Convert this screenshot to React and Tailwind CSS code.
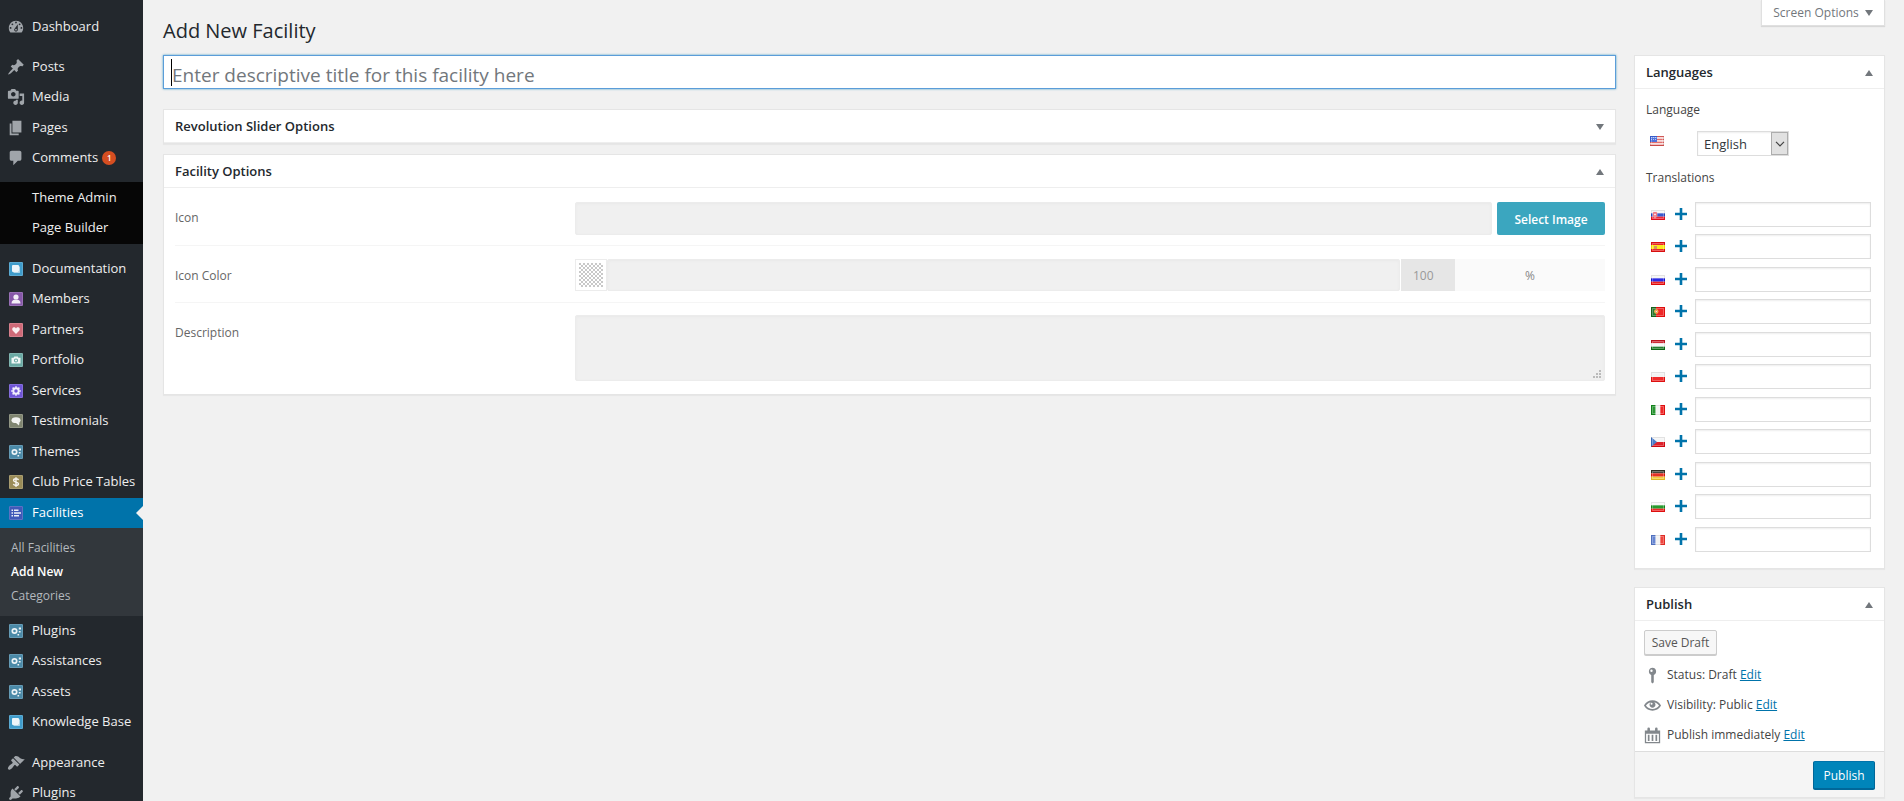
import React from "react";

const DASHICONS = {
  dashboard:
    "M3.76 16h12.48c1.1-1.37 1.76-3.11 1.76-5 0-4.42-3.58-8-8-8s-8 3.58-8 8c0 1.89.66 3.63 1.76 5zM10 4c.55 0 1 .45 1 1s-.45 1-1 1-1-.45-1-1 .45-1 1-1zM6 6c.55 0 1 .45 1 1s-.45 1-1 1-1-.45-1-1 .45-1 1-1zm8 0c.55 0 1 .45 1 1s-.45 1-1 1-1-.45-1-1 .45-1 1-1zm-5.37 5.55L12 7v6c0 1.1-.9 2-2 2s-2-.9-2-2c0-.57.24-1.08.63-1.45zM4 10c.55 0 1 .45 1 1s-.45 1-1 1-1-.45-1-1 .45-1 1-1zm12 0c.55 0 1 .45 1 1s-.45 1-1 1-1-.45-1-1 .45-1 1-1zm-5 3c0-.55-.45-1-1-1s-1 .45-1 1 .45 1 1 1 1-.45 1-1z",
  post: "M10.44 3.02l1.82-1.82 6.36 6.35-1.83 1.82c-1.05-.68-2.48-.57-3.41.36l-.75.75c-.92.93-1.04 2.35-.35 3.41l-1.83 1.82-2.41-2.41-2.8 2.79c-.42.42-3.38 2.71-3.8 2.29s1.86-3.39 2.28-3.81l2.79-2.79L4.1 9.36l1.83-1.82c1.05.69 2.48.57 3.4-.36l.75-.75c.93-.92 1.05-2.35.36-3.41z",
  media:
    "M13 11V4c0-.55-.45-1-1-1h-1.67L9 1H5L3.67 3H2c-.55 0-1 .45-1 1v7c0 .55.45 1 1 1h10c.55 0 1-.45 1-1zM7 4.5c1.38 0 2.5 1.12 2.5 2.5S8.38 9.5 7 9.5 4.5 8.38 4.5 7 5.62 4.5 7 4.5zM14 6h5v10.5c0 1.38-1.12 2.5-2.5 2.5S14 17.88 14 16.5s1.12-2.5 2.5-2.5c.17 0 .34.02.5.05V9h-3V6zm-4 8.05V13h2v3.5c0 1.38-1.12 2.5-2.5 2.5S7 17.88 7 16.5 8.12 14 9.5 14c.17 0 .34.02.5.05z",
  page: "M6 15V2h10v13H6zm-1 1h8v2H3V5h2v11z",
  comments: "M5 2h9c1.1 0 2 .9 2 2v7c0 1.1-.9 2-2 2h-2l-5 5v-5H5c-1.1 0-2-.9-2-2V4c0-1.1.9-2 2-2z",
  appearance:
    "M14.48 11.06L7.41 3.99l1.5-1.5c.5-.56 2.3-.47 3.51.32 1.21.8 1.43 1.28 2.91 2.1 1.18.64 2.45 1.26 4.45.85zm-.71.71L6.7 4.7 4.93 6.47c-.39.39-.39 1.02 0 1.41l1.06 1.06c.39.39.39 1.03 0 1.42-.6.6-1.43 1.11-2.21 1.69-.35.26-.7.53-1.01.84C1.43 14.23.4 16.08 1.4 17.07c.99 1 2.84-.03 4.18-1.36.31-.31.58-.66.85-1.02.57-.78 1.08-1.61 1.69-2.21.39-.39 1.02-.39 1.41 0l1.06 1.06c.39.39 1.02.39 1.41 0z",
  plugins:
    "M13.11 4.36L9.87 7.6 8 5.73l3.24-3.24c.35-.34 1.05-.2 1.56.32.52.51.66 1.21.31 1.55zm-8 1.77l.91-1.12 9.01 9.01-1.19.84c-.71.71-2.63 1.16-3.82 1.16H6.14L4.9 17.26c-.59.59-1.54.59-2.12 0-.59-.58-.59-1.53 0-2.12l1.24-1.24v-3.88c0-1.13.4-3.19 1.09-3.89zm7.26 3.97l3.24-3.24c.34-.35 1.04-.21 1.55.31.52.51.66 1.21.31 1.55l-3.24 3.25z",
  visibility:
    "M19.7 9.4C17.7 6 14 3.9 10 3.9S2.3 6 .3 9.4L0 10l.3.6c2 3.4 5.7 5.5 9.7 5.5s7.7-2.1 9.7-5.5l.3-.6-.3-.6zM10 14.1c-3.1 0-6-1.6-7.7-4.1C3.6 8 5.7 6.6 8 6.1c-.9.6-1.5 1.7-1.5 2.9 0 1.9 1.6 3.5 3.5 3.5s3.5-1.6 3.5-3.5c0-1.2-.6-2.3-1.5-2.9 2.3.5 4.4 1.9 5.7 3.9-1.7 2.5-4.6 4.1-7.7 4.1zM8.900 6.800a1.200 1.200 0 1 1 0 2.400 1.200 1.200 0 0 1 0-2.400z",
  status: "M10 1a4.3 4.3 0 0 0-1.5 8.3V18l1.5 1.5 1.5-1.5V9.3A4.3 4.3 0 0 0 10 1zM8.8 3a1.4 1.4 0 1 1 0 2.8 1.4 1.4 0 0 1 0-2.8z",
  calendar:
    "M1 4h3V2a1.500 1.500 0 0 1 3 0V4h6V2a1.500 1.500 0 0 1 3 0V4h3v15H1zM2.500 8v9.500h15V8zM4.500 9.200h2v7.300h-2zM9 9.200h2v7.300H9zM13.500 9.200h2v7.300h-2z",
};

function Dashicon({ name, className = "size-[18px]" }) {
  return (
    <svg viewBox="0 0 20 20" fill="currentColor" fillRule="evenodd" aria-hidden="true" className={`shrink-0 ${className}`}>
      <path d={DASHICONS[name]} />
    </svg>
  );
}

const GLYPHS = {
  book: (
    <>
      <rect x="3" y="3" width="7" height="7" rx="1" />
      <path d="M4.500 10.500h6v-6" fill="none" stroke="#fff" strokeOpacity=".6" />
    </>
  ),
  user: (
    <>
      <circle cx="7" cy="5" r="2.600" />
      <path d="M2.500 11.500c0-2.600 1.500-3.500 3-3.700h3c1.500.2 3 1.100 3 3.700z" />
    </>
  ),
  heart: <path d="M7 11 3.800 7.800C2.600 6.400 3.300 4.200 5 4.200c1 0 1.600.6 2 1.200.4-.6 1-1.200 2-1.200 1.700 0 2.400 2.200 1.200 3.600z" />,
  camera: (
    <>
      <path fillRule="evenodd" d="M2.500 4.800h2l.8-1.300h3.400l.8 1.300h2v5.700h-9zM7 5.400a2.100 2.100 0 1 0 0 4.200 2.100 2.100 0 0 0 0-4.200z" />
      <circle cx="7" cy="7.500" r="1.100" />
    </>
  ),
  gear: (
    <>
      <circle cx="7" cy="7" r="2.700" fill="none" stroke="#fff" strokeWidth="1.900" />
      <path d="M7 2.200v1.500M7 10.300v1.500M2.200 7h1.500M10.300 7h1.500M3.600 3.600l1 1M9.400 9.400l1 1M3.600 10.400l1-1M9.400 4.600l1-1" stroke="#fff" strokeWidth="1.500" />
    </>
  ),
  speech: (
    <>
      <ellipse cx="7" cy="6.200" rx="4.500" ry="2.900" />
      <path d="M6.500 8.500h4l-.5 3z" />
    </>
  ),
  gears: (
    <>
      <circle cx="5.500" cy="7" r="2.200" fill="none" stroke="#fff" strokeWidth="1.700" />
      <path d="M9.800 3.500h2.200v2H9.800zM9.800 7h1.800v1.500H9.800zM8.500 10h1.600v1.500H8.500z" />
    </>
  ),
  dollar: (
    <path d="M9.500 5.200C9.300 4.200 8.300 3.800 7 3.800S4.600 4.400 4.600 5.500 5.800 6.800 7 7.100s2.500.6 2.500 1.700-1.200 1.700-2.500 1.700-2.400-.6-2.600-1.600M7 2.200v9.800" fill="none" stroke="#fff" strokeWidth="1.400" />
  ),
  list: <path d="M2.500 3.500h1.500V5H2.500zM5 3.500h4.500V5H5zM2.500 6.300h1.500v1.500H2.500zM5 6.300h7v1.500H5zM2.500 9.100h1.500v1.500H2.500zM5 9.100h5v1.500H5z" />,
};

function TileIcon({ glyph, color }) {
  return (
    <svg viewBox="0 0 14 14" aria-hidden="true" className="size-[14px] shrink-0">
      <rect width="14" height="14" rx="1" fill={color} />
      <rect x=".5" y=".5" width="13" height="13" rx=".5" fill="none" stroke="#fff" strokeOpacity=".15" />
      <g fill="#fff" fillOpacity=".9" strokeOpacity=".9">
        {GLYPHS[glyph]}
      </g>
    </svg>
  );
}

const MENU_TOP = [
  ["Posts", "post"],
  ["Media", "media"],
  ["Pages", "page"],
  ["Comments", "comments", 1],
];

const MENU_TYPES = [
  ["Documentation", "book", "#3f9ccb"],
  ["Members", "user", "#8657a8"],
  ["Partners", "heart", "#cf6a78"],
  ["Portfolio", "camera", "#6aa9a3"],
  ["Services", "gear", "#6f55d6"],
  ["Testimonials", "speech", "#7f8570"],
  ["Themes", "gears", "#4b8aa8"],
  ["Club Price Tables", "dollar", "#9a8c58"],
];

const MENU_MORE = [
  ["Plugins", "gears", "#4b8aa8"],
  ["Assistances", "gears", "#4b8aa8"],
  ["Assets", "gears", "#4b8aa8"],
  ["Knowledge Base", "book", "#3f9ccb"],
];

function MenuItem({ label, icon, badge, current }) {
  return (
    <li className={`relative flex h-[30px] even:mb-px ${current ? "bg-[#0073aa] text-white" : "text-[#eee]"}`}>
      <a href="#" className="flex flex-1 items-center whitespace-nowrap text-[13px]">
        <span className="flex w-8 items-center justify-center text-[#a0a5aa]">{icon}</span>
        {label}
        {badge ? (
          <span className="ml-1 flex size-3.5 items-center justify-center rounded-full bg-[#d54e21] text-[8px] font-semibold text-white">{badge}</span>
        ) : null}
      </a>
      {current ? (
        <svg viewBox="0 0 7 14" aria-hidden="true" className="absolute top-2 right-0 h-3.5 w-[7px]">
          <path d="M7 0v14L0 7z" fill="#f1f1f1" />
        </svg>
      ) : null}
    </li>
  );
}

function Sidebar() {
  return (
    <nav aria-label="Main menu" className="flex w-[143px] shrink-0 flex-col bg-[#23282d] pt-3">
      <ul>
        <MenuItem label="Dashboard" icon={<Dashicon name="dashboard" />} />
      </ul>
      <ul className="mt-2.5">
        {MENU_TOP.map(([label, icon, badge]) => (
          <MenuItem key={label} label={label} badge={badge} icon={<Dashicon name={icon} />} />
        ))}
      </ul>
      <ul className="mt-2 bg-[#060606] pt-px">
        <MenuItem label="Theme Admin" />
        <MenuItem label="Page Builder" />
      </ul>
      <ul className="mt-2.5">
        {MENU_TYPES.map(([label, glyph, color]) => (
          <MenuItem key={label} label={label} icon={<TileIcon glyph={glyph} color={color} />} />
        ))}
        <MenuItem label="Facilities" current icon={<TileIcon glyph="list" color="#4059b8" />} />
      </ul>
      <ul className="bg-[#32373c] px-[11px] py-2 text-[12px] leading-6 text-[#b4b9be]">
        <li><a href="#">All Facilities</a></li>
        <li><a href="#" className="font-semibold text-white">Add New</a></li>
        <li><a href="#">Categories</a></li>
      </ul>
      <ul>
        {MENU_MORE.map(([label, glyph, color]) => (
          <MenuItem key={label} label={label} icon={<TileIcon glyph={glyph} color={color} />} />
        ))}
      </ul>
      <ul className="mt-2.5">
        <MenuItem label="Appearance" icon={<Dashicon name="appearance" />} />
        <MenuItem label="Plugins" icon={<Dashicon name="plugins" />} />
      </ul>
    </nav>
  );
}

function Triangle({ down, className = "" }) {
  return (
    <svg viewBox="0 0 8 6" fill="#72777c" aria-hidden="true" className={`h-1.5 w-2 ${className}`}>
      <path d={down ? "M0 0h8L4 6z" : "M0 6h8L4 0z"} />
    </svg>
  );
}

function Panel({ title, collapsed, children }) {
  return (
    <section className="border border-[#e5e5e5] bg-white shadow-[0_1px_1px_rgba(0,0,0,0.04)]">
      <header className="flex h-[33px] items-center justify-between border-b border-[#eee] px-[11px] pt-0.5">
        <h2 className="text-[13px] font-semibold text-[#23282d]">{title}</h2>
        <button type="button" aria-label={`Toggle panel: ${title}`} aria-expanded={!collapsed}>
          <Triangle down={collapsed} />
        </button>
      </header>
      {children}
    </section>
  );
}

const FIELD = "rounded-xs border border-[#ececec] bg-[#f0f0f0] shadow-[inset_0_1px_3px_rgba(0,0,0,0.03)] outline-none";

function Row({ id, label, children }) {
  return (
    <div className="grid grid-cols-[28%_1fr] border-b border-[#f5f5f5] pt-3 pb-2.5 last:border-b-0 last:pb-[13px]">
      <label htmlFor={id} className="self-start pt-[9px] text-[12px] leading-[18px] text-[#666]">{label}</label>
      {children}
    </div>
  );
}

function FacilityOptions() {
  return (
    <Panel title="Facility Options">
      <div className="pr-2.5 pl-[11px]">
        <Row id="icon" label="Icon">
          <div className="flex gap-[5px] pt-0.5">
            <input id="icon" className={`h-[33px] min-w-0 flex-1 px-2 text-[12px] ${FIELD}`} />
            <button type="button" className="h-[33px] w-[108px] rounded-xs bg-[#3ba6bf] pt-0.5 text-[12px] font-semibold text-white">Select Image</button>
          </div>
        </Row>
        <Row id="icon-color" label="Icon Color">
          <div className="my-px flex h-8">
            <button type="button" aria-label="Pick color" className="flex w-8 items-center justify-center border border-[#ececec] bg-white">
              <svg viewBox="0 0 24 24" aria-hidden="true" className="size-6">
                <defs>
                  <pattern id="checker" width="4" height="4" patternUnits="userSpaceOnUse">
                    <path d="M0 0h2v2H0zM2 2h2v2H2z" fill="#c8c8c8" />
                  </pattern>
                </defs>
                <rect width="24" height="24" fill="url(#checker)" />
              </svg>
            </button>
            <input id="icon-color" className={`min-w-0 flex-1 px-2 text-[12px] ${FIELD}`} />
            <input aria-label="Opacity" defaultValue="100" className="ml-px w-[54px] bg-[#e6e6e6] pt-0.5 pl-3 text-[12px] text-[#999] outline-none" />
            <span className="flex w-[150px] items-center justify-center bg-[#fafafa] pt-0.5 text-[12px] text-[#888]">%</span>
          </div>
        </Row>
        <Row id="description" label="Description">
          <div className="relative flex">
            <textarea id="description" className={`h-[66px] min-w-0 flex-1 resize-none px-2 text-[12px] ${FIELD}`} />
            <svg viewBox="0 0 8 8" fill="#bbb" aria-hidden="true" className="absolute right-1 bottom-[3px] size-2">
              <path d="M6 0h2v2H6zM3 3h2v2H3zM6 3h2v2H6zM0 6h2v2H0zM3 6h2v2H3zM6 6h2v2H6z" />
            </svg>
          </div>
        </Row>
      </div>
    </Panel>
  );
}

const stripes = (...colors) =>
  colors.map((c, i) => <rect key={i} y={(i * 10) / colors.length} width="14" height={10 / colors.length} fill={c} />);
const columns = (...colors) =>
  colors.map((c, i) => <rect key={i} x={(i * 14) / colors.length} width={14 / colors.length} height="10" fill={c} />);

const FLAGS = {
  English: (
    <>
      {stripes("#e0605e", "#f6d9d9", "#e0605e", "#f6d9d9", "#e0605e", "#f6d9d9", "#d8504e")}
      <rect width="7" height="6" fill="#3c62d8" />
      <path d="M1 1.500h5M1 3.500h5" stroke="#a9bdf5" strokeDasharray="1 1" />
    </>
  ),
  Slovak: (
    <>
      {stripes("#f4f4f4", "#2447c8", "#ee1020")}
      <path d="M2 2h4v3.500C6 7.500 4 8 4 8S2 7.500 2 5.500z" fill="#ee4050" stroke="#f3c6cc" strokeWidth=".6" />
      <path d="M4 3v4M3 4.500h2" stroke="#fff" strokeWidth=".7" />
    </>
  ),
  Spanish: (
    <>
      <rect width="14" height="10" fill="#e81010" />
      <rect y="3" width="14" height="4" fill="#fbe800" />
      <rect x="3" y="4" width="3" height="3" fill="#d08a50" />
    </>
  ),
  Russian: stripes("#f4f4f4", "#1414e0", "#ee0a0a"),
  Portuguese: (
    <>
      <rect width="14" height="10" fill="#ee1010" />
      <rect width="5" height="10" fill="#176a1c" />
      <circle cx="5.300" cy="4.500" r="2.200" fill="#f0c030" />
      <circle cx="5.300" cy="4.500" r="1" fill="#fff" stroke="#e04030" strokeWidth=".6" />
    </>
  ),
  Hungarian: stripes("#c81420", "#f6f6f6", "#0c7018"),
  Polish: stripes("#f2f2f2", "#ee1212"),
  Italian: columns("#128a1c", "#f4f4f4", "#ee1010"),
  Czech: (
    <>
      {stripes("#f4f4f4", "#dc0a14")}
      <path d="M0 0l6 5-6 5z" fill="#3a70c4" />
    </>
  ),
  German: stripes("#333326", "#e41a0c", "#f0c428"),
  Bulgarian: stripes("#f6f6f6", "#109018", "#ee1010"),
  French: columns("#5578cc", "#f2f2f2", "#ee3028"),
};

function Flag({ name }) {
  return (
    <svg viewBox="0 0 14 10" role="img" aria-label={name} className="h-2.5 w-3.5 shrink-0">
      {FLAGS[name]}
      <rect x="1.500" y="1.500" width="11" height="7" fill="#fff" fillOpacity=".1" stroke="#fff" strokeOpacity=".3" />
      <rect x=".5" y=".5" width="13" height="9" fill="none" stroke="#000" strokeOpacity=".07" />
    </svg>
  );
}

const TRANSLATIONS = ["Slovak", "Spanish", "Russian", "Portuguese", "Hungarian", "Polish", "Italian", "Czech", "German", "Bulgarian", "French"];

function Languages() {
  return (
    <Panel title="Languages">
      <div className="px-[11px] pt-3 pb-4 text-[12px] leading-[18px] text-[#444]">
        <label htmlFor="language" className="block font-medium">Language</label>
        <div className="mt-3 flex items-start pl-1">
          <span className="pt-[5px]"><Flag name="English" /></span>
          <span className="relative ml-[33px] flex">
            <select id="language" defaultValue="English" className="h-[25px] w-[92px] appearance-none border border-[#ddd] bg-white pl-1.5 text-[13px] text-[#32373c] shadow-[inset_0_1px_2px_rgba(0,0,0,0.07)] outline-none">
              <option>English</option>
            </select>
            <span className="pointer-events-none absolute top-px right-px flex h-[23px] w-[17px] items-center justify-center border border-[#adadad] bg-[#e1e1e1]">
              <svg viewBox="0 0 10 6" fill="none" stroke="#444" strokeWidth="1.200" aria-hidden="true" className="h-1.5 w-2.5">
                <path d="M1 .8l4 4 4-4" />
              </svg>
            </span>
          </span>
        </div>
        <p className="mt-[13px] font-medium">Translations</p>
        <ul className="mt-[15px]">
          {TRANSLATIONS.map((name) => (
            <li key={name} className="mb-[7px] flex items-center pl-[5px] even:mb-2 last:mb-0">
              <Flag name={name} />
              <a href="#" aria-label={`Add ${name} translation`} className="ml-2.5 flex pb-0.5">
                <svg viewBox="0 0 12 12" fill="#0073aa" aria-hidden="true" className="size-3">
                  <path d="M4.700 0h2.600v4.700H12v2.600H7.300V12H4.700V7.300H0V4.700h4.700z" />
                </svg>
              </a>
              <input aria-label={`${name} translation`} className="ml-2 h-[25px] w-[176px] min-w-0 border border-[#ddd] bg-white px-1 shadow-[inset_0_1px_2px_rgba(0,0,0,0.07)] outline-none" />
            </li>
          ))}
        </ul>
      </div>
    </Panel>
  );
}

function PublishLine({ icon, children }) {
  return (
    <div className="flex h-[30px] items-center">
      <span className="mr-1.5 flex w-[17px] justify-center text-[#82878c]">
        <Dashicon name={icon} className="size-[17px]" />
      </span>
      <p className="whitespace-pre">
        {children} <a href="#" className="text-[#0073aa] underline">Edit</a>
      </p>
    </div>
  );
}

function Publish() {
  return (
    <Panel title="Publish">
      <div className="px-[9px] pt-[9px] pb-px text-[12px] text-[#444]">
        <button type="button" className="mb-[5px] h-[25px] w-[73px] rounded-xs border border-[#ccc] bg-[#f7f7f7] text-[12px] text-[#555] shadow-[0_1px_0_#ccc]">Save Draft</button>
        <PublishLine icon="status">Status: <span className="font-medium">Draft</span></PublishLine>
        <PublishLine icon="visibility">Visibility: <span className="font-medium">Public</span></PublishLine>
        <PublishLine icon="calendar">Publish <span className="font-medium">immediately</span></PublishLine>
      </div>
      <footer className="flex justify-end border-t border-[#ddd] bg-[#f5f5f5] px-[9px] pt-[9px] pb-2">
        <button type="button" className="h-7 w-[62px] rounded-xs border border-[#006799] border-t-[#0073aa] bg-[#0085ba] pt-px text-[12px] font-medium text-white shadow-[0_1px_0_#006799]">Publish</button>
      </footer>
    </Panel>
  );
}

export default function App() {
  return (
    <div className="flex h-screen overflow-hidden bg-[#f1f1f1] font-['Open_Sans',sans-serif]">
      <Sidebar />
      <div className="flex min-w-0 flex-1 flex-col pr-[19px] pl-5">
        <div className="flex h-[55px] shrink-0 items-start justify-between">
          <h1 className="pt-4 text-[20px] leading-[30px] text-[#23282d]">Add New Facility</h1>
          <button type="button" className="flex h-[26px] w-[124px] items-center justify-center gap-1.5 border border-t-0 border-[#e0e0e0] bg-white text-[12px] text-[#72777c] shadow-[0_1px_1px_rgba(0,0,0,0.1)]">
            Screen Options
            <Triangle down />
          </button>
        </div>
        <div className="flex items-start gap-[18px]">
          <main className="flex min-w-0 flex-1 flex-col gap-2.5">
            <div className="relative mb-2.5 flex">
              <input
                aria-label="Title"
                placeholder="Enter descriptive title for this facility here"
                className="h-[34px] w-full border border-[#5b9dd9] bg-white pt-1.5 pl-2 text-[19px] text-[#32373c] shadow-[0_0_2px_rgba(30,140,190,0.8)] outline-none placeholder:text-[#72777c]"
              />
              <span aria-hidden="true" className="absolute top-1 left-2 h-[27px] w-px bg-black" />
            </div>
            <Panel title="Revolution Slider Options" collapsed />
            <FacilityOptions />
          </main>
          <aside className="flex w-[251px] shrink-0 flex-col gap-[18px]">
            <Languages />
            <Publish />
          </aside>
        </div>
      </div>
    </div>
  );
}
